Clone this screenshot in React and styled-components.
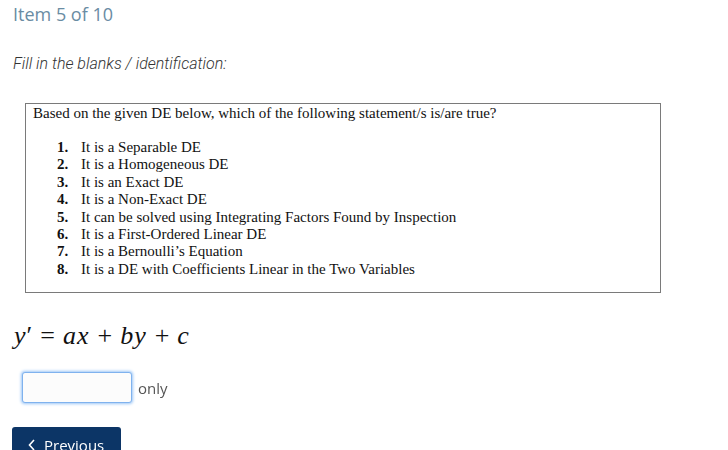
import React from "react"
import styled, { createGlobalStyle } from 'styled-components'

const GlobalStyle = createGlobalStyle`
body {
  margin: 0;
  background: #fff;
  font-family: 'Open Sans', 'Liberation Sans', sans-serif;
}
`;

const Page = styled.div`
display: flex;
flex-direction: column;
padding: 2px 0 0 13px;
height: 450px;
overflow: hidden;
box-sizing: border-box;
& > * {
  flex-shrink: 0;
}
`;

const Counter = styled.h1`
margin: 0;
font-size: 18px;
font-weight: 400;
color: #6a8ca3;
line-height: 24px;
`;

const Instruction = styled.p`
margin: 28px 0 0 0;
font-family: Roboto, 'Liberation Sans', sans-serif;
font-style: italic;
font-weight: 300;
font-size: 16px;
color: #333;
line-height: 19px;
`;

const QuestionBox = styled.div`
margin: 30px 0 0 12px;
width: 636px;
height: 190px;
box-sizing: border-box;
border: 1px solid #7a7a7a;
padding: 1px 0 0 7px;
font-family: 'Liberation Serif', 'Times New Roman', serif;
font-size: 15px;
color: #111;
`;

const Prompt = styled.div`
line-height: 17px;
`;

const List = styled.ol`
margin: 17px 0 0 0;
padding: 0 0 0 24px;
list-style: none;
`;

const Item = styled.li`
display: flex;
line-height: 17.4px;
`;

const Num = styled.span`
font-weight: 700;
width: 24px;
`;

const Equation = styled.div`
margin: 29px 0 0 1px;
font-family: 'Liberation Serif', 'Times New Roman', serif;
font-size: 26px;
color: #111;
line-height: 28px;
`;

const Var = styled.i`
font-style: italic;
letter-spacing: 1px;
`;

const Op = styled.span`
margin: 0 8px;
`;

const AnswerRow = styled.div`
display: flex;
align-items: center;
gap: 6px;
margin: 22px 0 0 9px;
`;

const Blank = styled.input`
width: 110px;
height: 31px;
box-sizing: border-box;
border: 1px solid #7fb2ee;
border-radius: 3px;
box-shadow: 0 0 3px 1px #9cc6f6;
outline: none;
background: #fcfcfc;
padding: 0 6px;
font-size: 14px;
`;

const Suffix = styled.span`
font-size: 15px;
color: #555;
`;

const NavButton = styled.button`
display: flex;
align-items: center;
gap: 8px;
margin: 24px 0 0 -1px;
width: 109px;
height: 34px;
border: none;
border-radius: 3px;
background: #0c3566;
color: #fff;
font-family: 'Open Sans', 'Liberation Sans', sans-serif;
font-size: 15px;
padding: 2px 0 0 16px;
align-self: flex-start;
`;

const statements = [
  "It is a Separable DE",
  "It is a Homogeneous DE",
  "It is an Exact DE",
  "It is a Non-Exact DE",
  "It can be solved using Integrating Factors Found by Inspection",
  "It is a First-Ordered Linear DE",
  "It is a Bernoulli\u2019s Equation",
  "It is a DE with Coefficients Linear in the Two Variables",
];

const App = () => (
  <>
    <GlobalStyle />
    <Page>
      <Counter>Item 5 of 10</Counter>
      <Instruction>Fill in the blanks / identification:</Instruction>
      <QuestionBox>
        <Prompt>Based on the given DE below, which of the following statement/s is/are true?</Prompt>
        <List>
          {statements.map((s, i) => (
            <Item key={i}><Num>{i + 1}.</Num>{s}</Item>
          ))}
        </List>
      </QuestionBox>
      <Equation>
        <Var>y</Var>′<Op>=</Op><Var>ax</Var><Op>+</Op><Var>by</Var><Op>+</Op><Var>c</Var>
      </Equation>
      <AnswerRow>
        <Blank type="text" autoFocus />
        <Suffix>only</Suffix>
      </AnswerRow>
      <NavButton>
        <svg width="8" height="12" viewBox="0 0 8 12"><path d="M6 1 L1.5 6 L6 11" stroke="#fff" strokeWidth="1.6" fill="none" /></svg>
        Previous
      </NavButton>
    </Page>
  </>
)
export default App;
